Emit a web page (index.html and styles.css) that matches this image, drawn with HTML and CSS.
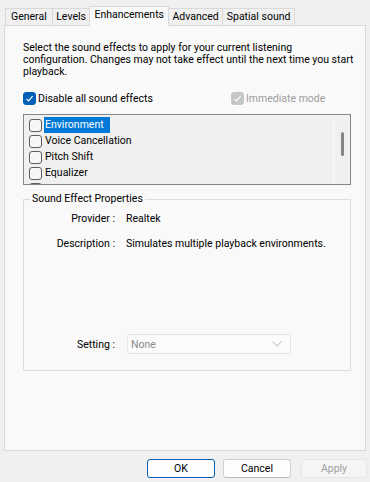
FILE: index.html
```html
<!DOCTYPE html>
<html lang="en">
<head>
    <meta charset="UTF-8">
    <title>Sound - Enhancements</title>
    <link rel="stylesheet" href="styles.css">
</head>
<body>
    <div class="tabs">
        <div class="tab tab-first">General</div>
        <div class="tab">Levels</div>
        <div class="tab tab-active">Enhancements</div>
        <div class="tab">Advanced</div>
        <div class="tab">Spatial sound</div>
    </div>

    <div class="panel">
        <p class="intro">Select the sound effects to apply for your current listening<br>configuration. Changes may not take effect until the next time you start<br>playback.</p>

        <div class="options">
            <label class="check-row">
                <span class="box box-checked">
                    <svg width="9" height="9" viewBox="0 0 9 9"><path d="M1.5 4.8 L3.6 6.9 L7.6 2.2" fill="none" stroke="#fff" stroke-width="1.2"/></svg>
                </span>
                Disable all sound effects
            </label>
            <label class="check-row check-disabled">
                <span class="box box-disabled">
                    <svg width="9" height="9" viewBox="0 0 9 9"><path d="M1.5 4.8 L3.6 6.9 L7.6 2.2" fill="none" stroke="#fff" stroke-width="1.2"/></svg>
                </span>
                Immediate mode
            </label>
        </div>

        <div class="effects-list">
            <div class="effects-items">
                <div class="effect"><span class="box"></span><span class="effect-name selected">Environment</span></div>
                <div class="effect"><span class="box"></span><span class="effect-name">Voice Cancellation</span></div>
                <div class="effect"><span class="box"></span><span class="effect-name">Pitch Shift</span></div>
                <div class="effect"><span class="box"></span><span class="effect-name">Equalizer</span></div>
                <div class="effect"><span class="box"></span></div>
            </div>
            <div class="scrollbar"><div class="thumb"></div></div>
        </div>

        <fieldset class="props">
            <legend>Sound Effect Properties</legend>
            <div class="prop-row">
                <span class="prop-label">Provider :</span>
                <span>Realtek</span>
            </div>
            <div class="prop-row">
                <span class="prop-label">Description :</span>
                <span>Simulates multiple playback environments.</span>
            </div>
            <div class="prop-row setting-row">
                <span class="prop-label">Setting :</span>
                <div class="combo">
                    <span>None</span>
                    <svg width="10" height="6" viewBox="0 0 10 6"><path d="M0.5 0.5 L5 5 L9.5 0.5" fill="none" stroke="#b4b4b4" stroke-width="1"/></svg>
                </div>
            </div>
        </fieldset>
    </div>

    <div class="buttons">
        <button class="btn btn-default">OK</button>
        <button class="btn">Cancel</button>
        <button class="btn btn-disabled">Apply</button>
    </div>
</body>
</html>
```

FILE: styles.css
```css
* {
    margin: 0;
    padding: 0;
    box-sizing: border-box;
}

body {
    background-color: #f0f0f0;
    font-family: Roboto, "Liberation Sans", sans-serif;
    font-size: 10.5px;
    color: #000;
    width: 370px;
    height: 482px;
    overflow: hidden;
}

.tabs {
    display: flex;
    align-items: flex-end;
    padding-left: 5px;
    height: 26px;
    position: relative;
    z-index: 1;
}

.tab {
    height: 17px;
    line-height: 15px;
    padding: 0 3.5px;
    background-color: #f0f0f0;
    border: 1px solid #d9d9d9;
    border-bottom: none;
    margin-right: -1px;
    margin-bottom: 1px;
}

.tab-first {
    padding: 0 5px;
}

.tab-active {
    height: 20px;
    line-height: 15px;
    background-color: #f9f9f9;
    margin-bottom: 0;
    padding: 0 4px;
}

.panel {
    margin: -1px 4px 0 4px;
    height: 426px;
    background-color: #f9f9f9;
    border: 1px solid #d9d9d9;
    padding: 16px 14px 0 18px;
}

.intro {
    line-height: 12px;
    white-space: nowrap;
}

.options {
    display: grid;
    grid-template-columns: 208px auto;
    margin-top: 14px;
}

.check-row {
    display: flex;
    align-items: center;
    gap: 2px;
    height: 13px;
}

.check-disabled {
    color: #9d9d9d;
}

.box {
    width: 13px;
    height: 13px;
    border: 1px solid #5c5c5c;
    border-radius: 3px;
    background-color: #f7f7f7;
    display: flex;
    align-items: center;
    justify-content: center;
    flex-shrink: 0;
}

.box-checked {
    background-color: #005fb8;
    border-color: #005fb8;
}

.box-disabled {
    background-color: #c6c6c6;
    border-color: #c6c6c6;
}

.effects-list {
    display: flex;
    margin-top: 9px;
    height: 71px;
    border: 1px solid #828790;
    background-color: #f0f0f0;
    overflow: hidden;
}

.effects-items {
    flex: 1;
    padding: 2px 0 0 5px;
}

.effect {
    display: flex;
    align-items: center;
    height: 16px;
}

.effect-name {
    margin-left: 2px;
    padding: 0 1px 1px 1px;
    line-height: 15px;
}

.selected {
    background-color: #0078d7;
    color: #fff;
    padding-right: 6px;
}

.scrollbar {
    width: 17px;
    border-left: 1px solid #f9f9f9;
    position: relative;
}

.thumb {
    position: absolute;
    left: 7px;
    top: 17px;
    width: 3px;
    height: 24px;
    background-color: #858585;
    border-radius: 2px;
}

.props {
    margin-top: 7px;
    height: 179px;
    border: 1px solid #dcdcdc;
    padding: 4px 0 16px 0;
    display: flex;
    flex-direction: column;
}

.props legend {
    margin-left: 6px;
    padding: 0 2px;
    line-height: 14px;
}

.prop-row {
    display: grid;
    grid-template-columns: 91px 1fr;
    column-gap: 11px;
    align-items: center;
    height: 16px;
    margin-bottom: 9px;
}

.prop-label {
    text-align: right;
}

.setting-row {
    margin-top: auto;
    margin-bottom: 0;
    height: 20px;
    column-gap: 12px;
}

.combo {
    width: 164px;
    height: 20px;
    border: 1px solid #e6e6e6;
    border-radius: 2px;
    background-color: #fbfbfb;
    display: flex;
    align-items: center;
    justify-content: space-between;
    padding: 0 8px 0 3px;
    color: #8a8a8a;
}

.buttons {
    display: flex;
    justify-content: flex-end;
    gap: 8px;
    padding: 8px 3px 0 0;
}

.btn {
    font-family: inherit;
    font-size: 10.5px;
    width: 68px;
    height: 19px;
    background-color: #fdfdfd;
    border: 1px solid #d0d0d0;
    border-bottom-color: #bcbcbc;
    border-radius: 3px;
    color: #000;
}

.btn-default {
    border: 1px solid #005fb8;
}

.btn-disabled {
    background-color: #f5f5f5;
    border-color: #e5e5e5;
    color: #a0a0a0;
    margin-left: 2px;
    width: 66px;
}
```
